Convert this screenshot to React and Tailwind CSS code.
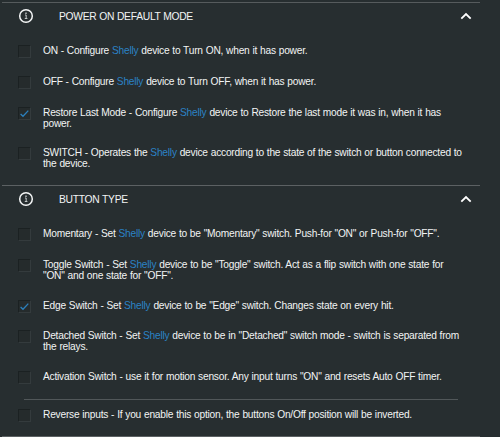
function InfoIcon() {
  return (
    <svg width="16" height="16" viewBox="0 0 16 16" fill="none" className="shrink-0">
      <circle cx="8" cy="8" r="6.3" stroke="#f4f6f6" strokeWidth="1.5" />
      <path d="M7 7h1.2v3.4M6.8 10.5h2.6" stroke="#c0c5c5" strokeWidth="1" />
      <path d="M7.3 4.6h1.4v1.3H7.3z" fill="#c0c5c5" />
    </svg>
  );
}

function Chevron() {
  return (
    <svg width="12" height="8" viewBox="0 0 12 8" fill="none" className="shrink-0">
      <path d="M1.3 6.7L6 2l4.7 4.7" stroke="#fff" strokeWidth="1.8" />
    </svg>
  );
}

function Header({ title }) {
  return (
    <div className="flex h-[25px] items-center pr-[8px] pl-[16px]">
      <InfoIcon />
      <h2 className="ml-[25px] flex-1 pt-[2px] text-[10.3px] leading-[12px] tracking-[-0.28px] [word-spacing:0.2px] whitespace-nowrap">{title}</h2>
      <Chevron />
    </div>
  );
}

function Option({ checked, height, lines }) {
  return (
    <label className={`flex items-start pl-[16px] ${height}`}>
      <span className="flex h-[13px] w-[13px] shrink-0 items-center justify-center border border-[#1b2122] border-r-[#343b3d] border-b-[#343b3d] bg-[#252b2c]">
        {checked && (
          <svg width="11" height="11" viewBox="0 0 11 11" fill="none" className="shrink-0">
            <path d="M1.6 6l2.4 2.3L9.3 2.6" stroke="#2c80bd" strokeWidth="1.3" />
          </svg>
        )}
      </span>
      <span className="ml-[12px] text-[10.2px] leading-[11px] tracking-[-0.22px] [word-spacing:0.3px] whitespace-nowrap">
        {lines.map((line) => (
          <span key={line} className="block">
            {line.split("Shelly").map((part, i) => (
              <span key={i}>
                {i > 0 && <span className="text-[#2b82c6]">Shelly</span>}
                {part}
              </span>
            ))}
          </span>
        ))}
      </span>
    </label>
  );
}

const powerModes = [
  { height: "h-[31px]", lines: ["ON - Configure Shelly device to Turn ON, when it has power."] },
  { height: "h-[31px]", lines: ["OFF - Configure Shelly device to Turn OFF, when it has power."] },
  { height: "h-[40px]", checked: true, lines: ["Restore Last Mode - Configure Shelly device to Restore the last mode it was in, when it has", "power."] },
  { height: "h-[38px]", lines: ["SWITCH - Operates the Shelly device according to the state of the switch or button connected to", "the device."] },
];

const buttonTypes = [
  { height: "h-[31px]", lines: ['Momentary - Set Shelly device to be "Momentary" switch. Push-for "ON" or Push-for "OFF".'] },
  { height: "h-[41px]", lines: ['Toggle Switch - Set Shelly device to be "Toggle" switch. Act as a flip switch with one state for', '"ON" and one state for "OFF".'] },
  { height: "h-[30px]", checked: true, lines: ['Edge Switch - Set Shelly device to be "Edge" switch. Changes state on every hit.'] },
  { height: "h-[41px]", lines: ['Detached Switch - Set Shelly device to be in "Detached" switch mode - switch is separated from', "the relays."] },
  { height: "h-[28px]", lines: ['Activation Switch - use it for motion sensor. Any input turns "ON" and resets Auto OFF timer.'] },
];

export default function App() {
  return (
    <main className="h-[437px] w-[500px] overflow-hidden bg-[#272e30] pt-[2px] pl-[2px] font-['Liberation_Sans',Arial,sans-serif] text-[#f2f4f4]">
      <section className="h-[183px] w-[478px] border-t border-[#565b5d]">
        <Header title="POWER ON DEFAULT MODE" />
        <div className="pt-[17px]">
          {powerModes.map((o) => <Option key={o.lines[0]} {...o} />)}
        </div>
      </section>
      <section className="h-[251px] w-[478px] border-t border-[#5c6163]">
        <Header title="BUTTON TYPE" />
        <div className="pt-[17px]">
          {buttonTypes.map((o) => <Option key={o.lines[0]} {...o} />)}
        </div>
        <div className="mr-[22px] ml-[22px] h-[10px] border-t border-[#515759]" />
        <Option height="h-[27px]" lines={["Reverse inputs - If you enable this option, the buttons On/Off position will be inverted."]} />
      </section>
      <div className="w-[478px] border-t border-[#5c6163]" />
    </main>
  );
}
